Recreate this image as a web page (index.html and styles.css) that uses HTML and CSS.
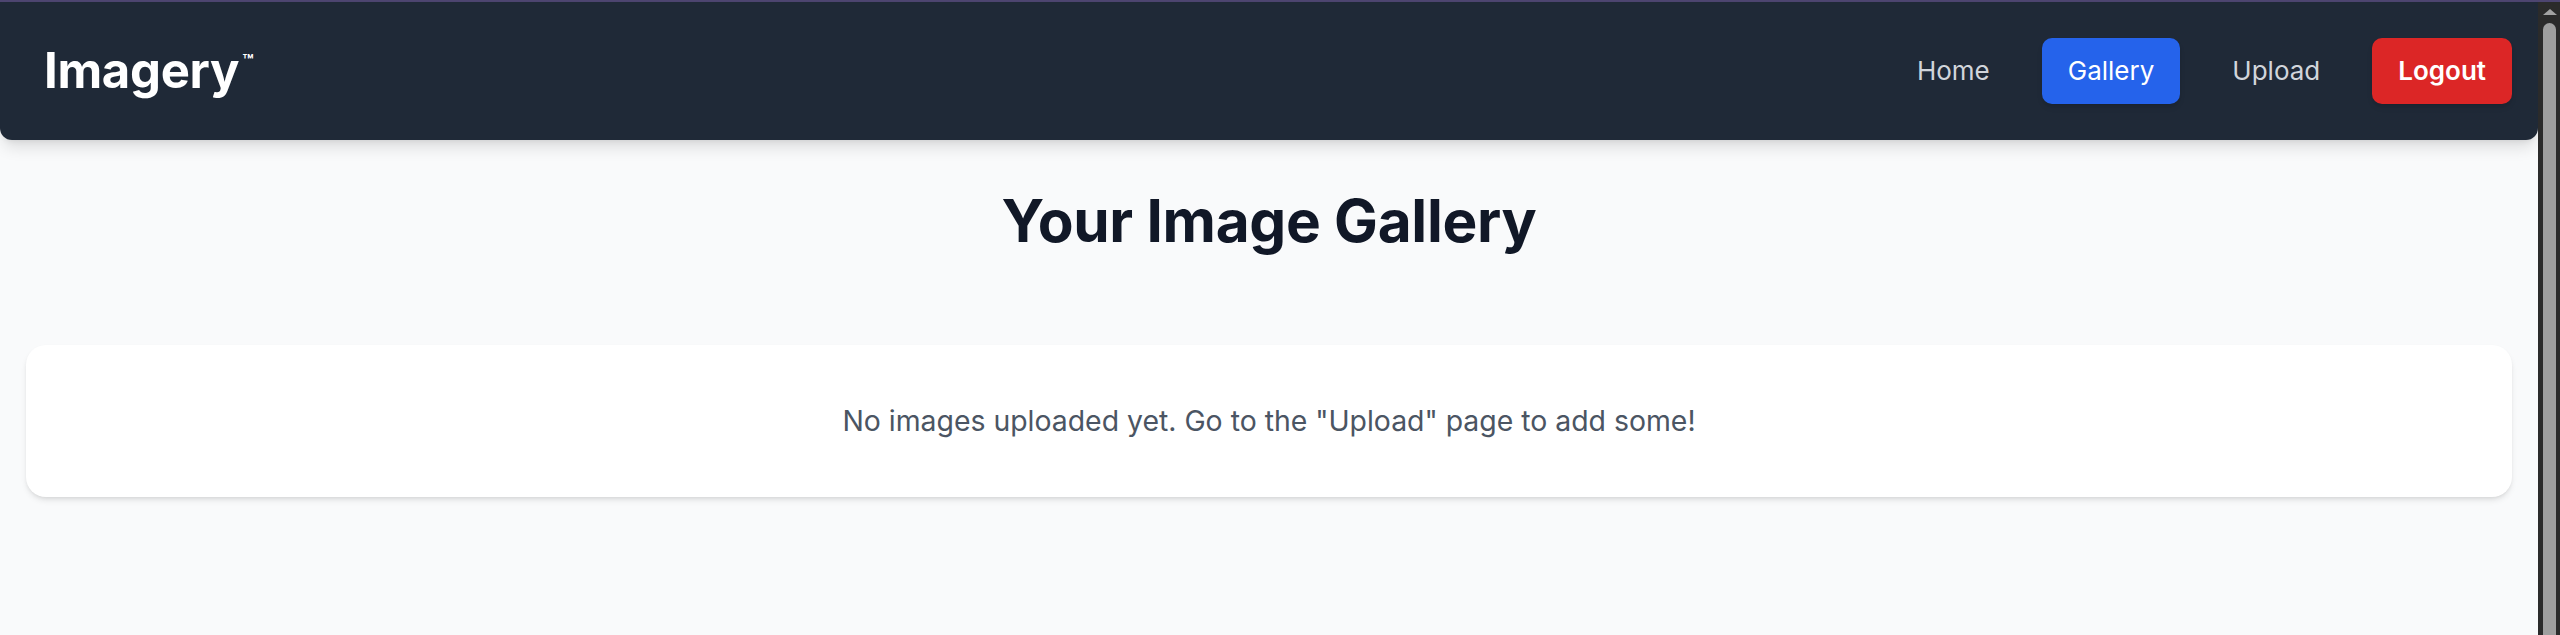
FILE: index.html
```html
<!DOCTYPE html>
<html lang="en">
<head>
<meta charset="utf-8">
<title>Imagery - Gallery</title>
<link rel="stylesheet" href="styles.css">
</head>
<body>
<div class="topline"></div>
<div class="frame">
  <div class="page">
    <nav class="navbar">
      <div class="brand">Imagery<span class="tm">™</span></div>
      <div class="links">
        <a class="link">Home</a>
        <a class="link active">Gallery</a>
        <a class="link">Upload</a>
        <a class="link logout">Logout</a>
      </div>
    </nav>
    <main class="main">
      <h1 class="title">Your Image Gallery</h1>
      <section class="card">
        <p class="empty">No images uploaded yet. Go to the "Upload" page to add some!</p>
      </section>
    </main>
  </div>
  <div class="scrollbar">
    <div class="sb-button"><span class="sb-arrow"></span></div>
    <div class="sb-thumb"></div>
  </div>
</div>
</body>
</html>
```
FILE: styles.css
```css
html {
  background: #f9fafb;
}
body {
  margin: 0;
  height: 635px;
  overflow: hidden;
  background: #f9fafb;
  font-family: Inter, "Noto Sans", "Liberation Sans", sans-serif;
}
.topline {
  height: 2px;
  background: #4d4570;
}
.frame {
  display: flex;
  height: 633px;
}
.page {
  flex: 1;
  min-width: 0;
}
.scrollbar {
  width: 22px;
  flex: none;
  background: #2b2b2b;
  display: flex;
  flex-direction: column;
}
.sb-button {
  height: 21px;
  display: flex;
  justify-content: center;
  padding-top: 7px;
  box-sizing: border-box;
}
.sb-arrow {
  width: 0;
  height: 0;
  border-left: 7px solid transparent;
  border-right: 7px solid transparent;
  border-bottom: 6px solid #a3a3a3;
  margin-left: 1px;
}
.sb-thumb {
  flex: 1;
  margin: 0 4px 0 5px;
  background: #9f9f9f;
  border-radius: 7px 7px 0 0;
}
.navbar {
  display: flex;
  align-items: center;
  justify-content: space-between;
  background: #1f2937;
  padding: 36px 26px 36px 44px;
  border-radius: 0 0 12px 12px;
  box-shadow: 0 10px 16px -3px rgba(0, 0, 0, 0.12), 0 4px 6px -4px rgba(0, 0, 0, 0.1);
}
.brand {
  color: #ffffff;
  font-size: 49px;
  line-height: 58px;
  font-weight: 700;
  letter-spacing: -0.3px;
  display: flex;
  align-items: flex-start;
}
.tm {
  font-size: 18px;
  line-height: 18px;
  font-weight: 700;
  margin-top: 10px;
  margin-left: 3px;
  letter-spacing: 0;
}
.links {
  display: flex;
  align-items: center;
  gap: 26px;
}
.link {
  color: #d1d5db;
  font-size: 26px;
  line-height: 40px;
  padding: 13px 26px;
  border-radius: 10px;
  text-decoration: none;
}
.active {
  background: #2563eb;
  color: #ffffff;
  font-weight: 400;
  box-shadow: 0 4px 6px -1px rgba(0, 0, 0, 0.1), 0 2px 4px -2px rgba(0, 0, 0, 0.1);
}
.logout {
  background: #dc2626;
  color: #ffffff;
  font-weight: 600;
  box-shadow: 0 4px 6px -1px rgba(0, 0, 0, 0.1), 0 2px 4px -2px rgba(0, 0, 0, 0.1);
}
.main {
  padding: 0 26px;
}
.title {
  margin: 48px 0 92px;
  text-align: center;
  color: #111827;
  font-size: 58.5px;
  line-height: 65px;
  font-weight: 700;
  letter-spacing: -0.3px;
}
.card {
  background: #ffffff;
  border-radius: 20px;
  padding: 53px 26px;
  box-shadow: 0 4px 6px -1px rgba(0, 0, 0, 0.1), 0 2px 4px -2px rgba(0, 0, 0, 0.1);
}
.empty {
  margin: 0;
  text-align: center;
  color: #4b5563;
  font-size: 28.4px;
  line-height: 46px;
}
```
